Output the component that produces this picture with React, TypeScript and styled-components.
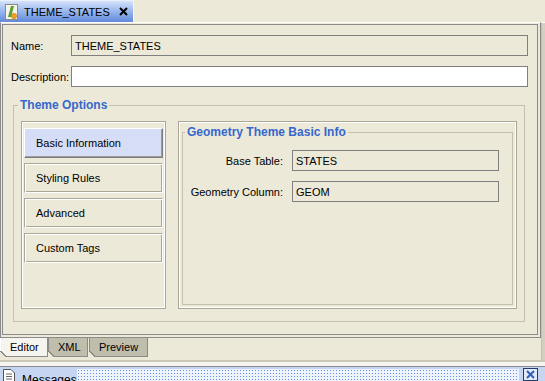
import React from "react";
import styled, { createGlobalStyle } from "styled-components";

const GlobalStyle = createGlobalStyle`
  html, body { margin: 0; padding: 0; background: #ECE9D8; }
  body {
    font-family: "Liberation Sans", Arial, sans-serif;
    font-size: 11px;
    color: #000;
  }
  * { box-sizing: border-box; }
`;

const Window = styled.div`
  width: 545px;
  height: 381px;
  display: flex;
  flex-direction: column;
  overflow: hidden;
  background: #ECE9D8;
`;

const TabStrip = styled.div`
  height: 22px;
  flex: none;
  display: flex;
`;

const DocTab = styled.div`
  width: 134px;
  display: flex;
  align-items: center;
  gap: 6px;
  padding: 0 5px 0 5px;
  background: linear-gradient(#D6E3FA, #9DBAEE 45%, #5F89DA);
  border-top: 1px solid #E9EFFB;
  border-right: 1px solid #F2F5FC;
`;

const DocTitle = styled.span`
  flex: 1;
  white-space: nowrap;
`;

const Body = styled.div`
  flex: 1;
  display: flex;
  min-height: 0;
`;

const Column = styled.div`
  flex: 1;
  display: flex;
  flex-direction: column;
  min-width: 0;
`;

const Gutter = styled.div`
  width: 4px;
  flex: none;
  background: #D3D0C2;
  border-left: 1px solid #C2BFAF;
  border-top: 1px solid #FFFFFF;
`;

const Frame = styled.div`
  flex: 1;
  display: flex;
  min-height: 0;
  border: 1px solid #8A8A8A;
  border-top-color: #FFFFFF;
  padding: 1px 2px 2px 1px;
`;

const Pane = styled.div`
  flex: 1;
  display: flex;
  flex-direction: column;
  min-width: 0;
  border: 1px solid #8A8A8A;
  padding: 10px 9px 12px 8px;
`;

const FormGrid = styled.div`
  display: grid;
  grid-template-columns: 60px 1fr;
  row-gap: 10px;
  align-items: center;
`;

const FieldLabel = styled.span<{ $right?: boolean }>`
  white-space: nowrap;
  text-align: ${(p) => (p.$right ? "right" : "left")};
`;

const TextBox = styled.div<{ $editable?: boolean }>`
  height: 21px;
  display: flex;
  align-items: center;
  padding: 0 3px;
  border: 1px solid #7F7F7F;
  background: ${(p) => (p.$editable ? "#FFFFFF" : "#ECE9D8")};
`;

const GroupBox = styled.fieldset`
  flex: 1;
  min-height: 0;
  min-width: 0;
  display: flex;
  margin: 11px 3px 0 2px;
  padding: 9px 7px 12px 7px;
  border: 1px solid #C3C0B0;
`;

const GroupTitle = styled.legend<{ $offset: number }>`
  margin-left: ${(p) => p.$offset}px;
  padding: 0 2px;
  font-size: 12px;
  line-height: 14px;
  font-weight: bold;
  color: #3568CD;
`;

const Split = styled.div`
  flex: 1;
  display: flex;
  gap: 12px;
`;

const EtchedPanel = styled.div`
  display: flex;
  flex-direction: column;
  border: 1px solid #A9A695;
  box-shadow: inset 0 0 0 1px #FFFFFF;
`;

const NavPanel = styled(EtchedPanel)`
  width: 145px;
  flex: none;
  gap: 5px;
  padding: 6px 2px 2px 2px;
`;

const DetailPanel = styled(EtchedPanel)`
  flex: 1;
  padding: 3px;
`;

const NavButton = styled.div<{ $selected?: boolean }>`
  height: 30px;
  display: flex;
  align-items: center;
  padding-left: 11px;
  background: ${(p) => (p.$selected ? "#D5DEF6" : "#ECE9D8")};
  border: 1px solid ${(p) => (p.$selected ? "#FFFFFF" : "#ACA899")};
  border-right-color: ${(p) => (p.$selected ? "#7C7C7C" : "#FFFFFF")};
  border-bottom-color: ${(p) => (p.$selected ? "#7C7C7C" : "#FFFFFF")};
  box-shadow: ${(p) =>
    p.$selected
      ? "inset -1px -1px 0 #9C9C9C"
      : "inset 1px 1px 0 #FFFFFF, inset -1px -1px 0 #ACA899"};
`;

const InfoBox = styled.fieldset`
  flex: 1;
  margin: 0;
  padding: 11px 0 0 0;
  border: 1px solid #C3C0B0;
`;

const InfoGrid = styled.div`
  display: grid;
  grid-template-columns: 100px 207px;
  column-gap: 9px;
  row-gap: 10px;
  align-items: center;
`;

const EditorTabs = styled.div`
  height: 19px;
  flex: none;
  display: flex;
`;

const EditorTab = styled.div<{ $active?: boolean; $width: number }>`
  position: relative;
  width: ${(p) => p.$width}px;
  display: flex;
  align-items: center;
  padding: 0 0 1px 9px;
  background: ${(p) => (p.$active ? "#F5F4EE" : "#BFBDAC")};
  border: 1px solid #8A8A8A;
  border-top: none;
  border-left-color: ${(p) => (p.$active ? "#FFFFFF" : "#8A8A8A")};
  margin-right: ${(p) => (p.$active ? 0 : 1)}px;

  &::before {
    content: "";
    position: absolute;
    left: -1px;
    bottom: -1px;
    width: 6px;
    height: 6px;
    background: linear-gradient(45deg, #ECE9D8 48%, #8A8A8A 48%, #8A8A8A 62%, transparent 62%);
  }
`;

const Spacer = styled.div`
  height: 3px;
  flex: none;
`;

const Divider = styled.div`
  height: 7px;
  flex: none;
  background: #F6F5F0;
  border-top: 2px solid #CCC9B9;
  border-bottom: 1px solid #8A8A8A;
`;

const MessagesBar = styled.div`
  height: 14px;
  flex: none;
  display: flex;
  background: #C5D5F2;
  overflow: hidden;
`;

const MessagesTitle = styled.div`
  width: 77px;
  flex: none;
  display: flex;
  align-items: flex-start;
  gap: 7px;
  padding: 2px 0 0 3px;
  font-size: 12px;
  line-height: 14px;

  span {
    margin-top: 4px;
  }
`;

const Dots = styled.div`
  flex: 1;
  margin-top: 2px;
  background-color: #EEF3FC;
  background-image: radial-gradient(circle, #5C8FE8 0.9px, transparent 1px);
  background-size: 3px 3px;
`;

const CloseBox = styled.div`
  width: 15px;
  flex: none;
  margin: 1px 7px 0 4px;
  border: 1px solid #203C6E;
  background: #E2EAF8;
  display: flex;
  align-items: center;
  justify-content: center;
`;

const ThemeIcon = () => (
  <svg width="13" height="16" viewBox="0 0 13 16">
    <rect x="0.5" y="0.5" width="12" height="15" fill="#F4F4EC" stroke="#8C8C7C" />
    <path d="M3 13 L6 2 L9 2 L6 13 Z" fill="#5E9E2C" />
    <circle cx="9" cy="12" r="2.6" fill="#F1A11C" stroke="#C56D08" strokeWidth="0.6" />
  </svg>
);

const CloseGlyph = () => (
  <svg width="9" height="9" viewBox="0 0 9 9">
    <path d="M1 1 L8 8 M8 1 L1 8" stroke="#000" strokeWidth="2" />
  </svg>
);

const PageIcon = () => (
  <svg width="12" height="14" viewBox="0 0 12 14">
    <path d="M0.5 0.5 H8 L11.5 4 V13.5 H0.5 Z" fill="#FFFFFF" stroke="#555" />
    <path d="M3 5 H9 M3 7.5 H9 M3 10 H9" stroke="#666" />
  </svg>
);

const navItems = ["Basic Information", "Styling Rules", "Advanced", "Custom Tags"];

export default function App() {
  return (
    <Window>
      <GlobalStyle />
      <TabStrip>
        <DocTab>
          <ThemeIcon />
          <DocTitle>THEME_STATES</DocTitle>
          <CloseGlyph />
        </DocTab>
      </TabStrip>
      <Body>
        <Column>
          <Frame>
            <Pane>
              <FormGrid>
                <FieldLabel>Name:</FieldLabel>
                <TextBox>THEME_STATES</TextBox>
                <FieldLabel>Description:</FieldLabel>
                <TextBox $editable />
              </FormGrid>
              <GroupBox>
                <GroupTitle $offset={-3}>Theme Options</GroupTitle>
                <Split>
                  <NavPanel>
                    {navItems.map((item, i) => (
                      <NavButton key={item} $selected={i === 0}>
                        {item}
                      </NavButton>
                    ))}
                  </NavPanel>
                  <DetailPanel>
                    <InfoBox>
                      <GroupTitle $offset={2}>Geometry Theme Basic Info</GroupTitle>
                      <InfoGrid>
                        <FieldLabel $right>Base Table:</FieldLabel>
                        <TextBox>STATES</TextBox>
                        <FieldLabel $right>Geometry Column:</FieldLabel>
                        <TextBox>GEOM</TextBox>
                      </InfoGrid>
                    </InfoBox>
                  </DetailPanel>
                </Split>
              </GroupBox>
            </Pane>
          </Frame>
          <EditorTabs>
            <EditorTab $active $width={48}>Editor</EditorTab>
            <EditorTab $width={40}>XML</EditorTab>
            <EditorTab $width={59}>Preview</EditorTab>
          </EditorTabs>
          <Spacer />
        </Column>
        <Gutter />
      </Body>
      <Divider />
      <MessagesBar>
        <MessagesTitle>
          <PageIcon />
          <span>Messages</span>
        </MessagesTitle>
        <Dots />
        <CloseBox>
          <svg width="9" height="9" viewBox="0 0 9 9">
            <path d="M1 1 L8 8 M8 1 L1 8" stroke="#2F5FB8" strokeWidth="2" />
          </svg>
        </CloseBox>
      </MessagesBar>
    </Window>
  );
}
